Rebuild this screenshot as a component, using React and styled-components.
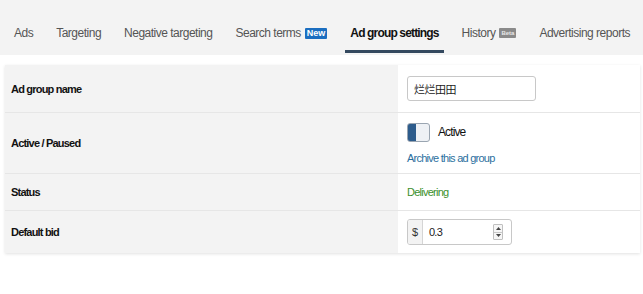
import React from "react";
import styled, { createGlobalStyle } from "styled-components";

const GlobalStyle = createGlobalStyle`
    html, body {
        margin: 0;
        padding: 0;
        background: #ffffff;
        font-family: "Liberation Sans", Arial, sans-serif;
    }
`;

const Page = styled.div`
    width: 643px;
    height: 294px;
    background: #ffffff;
    overflow: hidden;
`;

const TabBar = styled.nav`
    display: flex;
    align-items: stretch;
    height: 55px;
    box-sizing: border-box;
    padding: 0 0 2px 9px;
    gap: 13px;
    background: #f3f3f3;
`;

const Tab = styled.div`
    display: flex;
    align-items: center;
    gap: 4px;
    padding: 13px 5px 0;
    white-space: nowrap;
    font-size: 12px;
    letter-spacing: ${(p) => (p.active ? "-0.85px" : "-0.5px")};
    color: ${(p) => (p.active ? "#111111" : "#555555")};
    font-weight: ${(p) => (p.active ? 700 : 400)};
    box-shadow: ${(p) => (p.active ? "inset 0 -3px 0 #34495f" : "none")};
`;

const Badge = styled.span`
    display: inline-block;
    font-size: ${(p) => (p.small ? 6 : 9)}px;
    font-weight: 700;
    letter-spacing: 0;
    line-height: 1;
    padding: ${(p) => (p.small ? "2px 2px" : "1px 2px")};
    border-radius: 1px;
    color: ${(p) => (p.small ? "#e8e8e8" : "#ffffff")};
    background: ${(p) => (p.small ? "#8a8a8a" : "#1b6ec0")};
`;

const Panel = styled.section`
    margin: 10px 3px 0 5px;
    box-shadow: 0 1px 3px rgba(0, 0, 0, 0.12);
`;

const Row = styled.div`
    display: grid;
    grid-template-columns: 393px 1fr;
    box-sizing: border-box;
    height: ${(p) => p.h}px;
    border-top: ${(p) => (p.first ? "none" : "1px solid #e6e6e6")};
`;

const Label = styled.div`
    display: flex;
    align-items: center;
    padding-left: 6px;
    background: #f3f3f3;
    font-size: 11px;
    font-weight: 700;
    letter-spacing: -0.8px;
    color: #111111;
`;

const Value = styled.div`
    display: flex;
    flex-direction: column;
    justify-content: center;
    align-items: flex-start;
    gap: ${(p) => p.gap || 0}px;
    padding-left: 9px;
    background: #ffffff;
    font-size: 11px;
    letter-spacing: -0.75px;
    color: #111111;
`;

const TextInput = styled.div`
    box-sizing: border-box;
    width: 129px;
    height: 25px;
    display: flex;
    align-items: center;
    padding-left: 6px;
    border: 1px solid #c8c8c8;
    border-radius: 3px;
    background: #ffffff;
    font-family: "Noto Sans CJK SC", sans-serif;
    font-size: 11px;
    letter-spacing: -0.5px;
    color: #222222;
`;

const ToggleLine = styled.div`
    display: flex;
    align-items: center;
    gap: 8px;
    font-size: 12px;
    letter-spacing: -0.9px;
`;

const Toggle = styled.div`
    box-sizing: border-box;
    width: 23px;
    height: 19px;
    border: 1px solid #9aa5b1;
    border-radius: 3px;
    background: linear-gradient(to right, #2d5c8c 0, #2d5c8c 8px, #eef1f5 8px);
`;

const Link = styled.a`
    font-size: 11px;
    color: #2b6f9e;
    text-decoration: none;
`;

const Delivering = styled.span`
    font-size: 11px;
    color: #3b8f2c;
`;

const BidBox = styled.div`
    box-sizing: border-box;
    width: 105px;
    height: 26px;
    display: flex;
    align-items: stretch;
    border: 1px solid #c8c8c8;
    border-radius: 3px;
    overflow: hidden;
`;

const Addon = styled.div`
    width: 14px;
    display: flex;
    align-items: center;
    justify-content: center;
    background: #f3f3f3;
    border-right: 1px solid #d5d5d5;
    font-size: 11px;
    letter-spacing: 0;
    color: #333333;
`;

const BidValue = styled.div`
    flex: 1;
    display: flex;
    align-items: center;
    justify-content: space-between;
    padding: 0 8px 0 6px;
    font-size: 11px;
    color: #222222;
`;

const Spinner = styled.div`
    display: flex;
    flex-direction: column;
    width: 8px;
    height: 14px;
    border: 1px solid #c0c0c0;
    border-radius: 1px;
    background: #f6f6f6;
`;

const Arrow = styled.div`
    flex: 1;
    display: flex;
    align-items: center;
    justify-content: center;
    & + & {
        border-top: 1px solid #c8c8c8;
    }
`;

const tabs = [
    { label: "Ads" },
    { label: "Targeting" },
    { label: "Negative targeting" },
    { label: "Search terms", badge: "New" },
    { label: "Ad group settings", active: true },
    { label: "History", badge: "Beta", small: true },
    { label: "Advertising reports" },
];

export default function App() {
    return (
        <Page>
            <GlobalStyle />
            <TabBar>
                {tabs.map((t) => (
                    <Tab key={t.label} active={t.active}>
                        {t.label}
                        {t.badge && <Badge small={t.small}>{t.badge}</Badge>}
                    </Tab>
                ))}
            </TabBar>

            <Panel>
                <Row first h={47}>
                    <Label>Ad group name</Label>
                    <Value>
                        <TextInput>烂烂田田</TextInput>
                    </Value>
                </Row>
                <Row h={61}>
                    <Label>Active / Paused</Label>
                    <Value gap={10}>
                        <ToggleLine>
                            <Toggle />
                            Active
                        </ToggleLine>
                        <Link href="#">Archive this ad group</Link>
                    </Value>
                </Row>
                <Row h={37}>
                    <Label>Status</Label>
                    <Value>
                        <Delivering>Delivering</Delivering>
                    </Value>
                </Row>
                <Row h={43}>
                    <Label>Default bid</Label>
                    <Value>
                        <BidBox>
                            <Addon>$</Addon>
                            <BidValue>
                                0.3
                                <Spinner>
                                    <Arrow>
                                        <svg width="5" height="3" viewBox="0 0 5 3">
                                            <path d="M0 3 L2.5 0 L5 3 Z" fill="#444" />
                                        </svg>
                                    </Arrow>
                                    <Arrow>
                                        <svg width="5" height="3" viewBox="0 0 5 3">
                                            <path d="M0 0 L2.5 3 L5 0 Z" fill="#444" />
                                        </svg>
                                    </Arrow>
                                </Spinner>
                            </BidValue>
                        </BidBox>
                    </Value>
                </Row>
            </Panel>
        </Page>
    );
}
